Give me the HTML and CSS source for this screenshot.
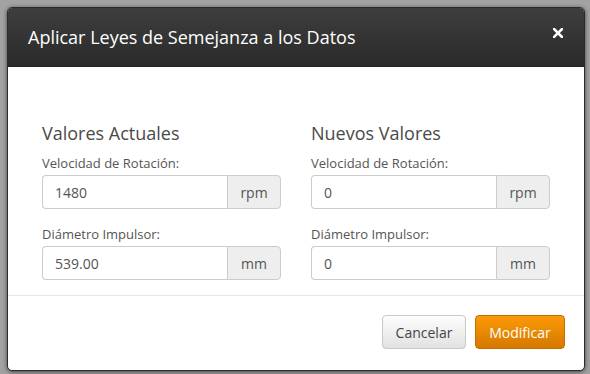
FILE: index.html
```html
<!DOCTYPE html>
<html lang="es">
<head>
    <meta charset="UTF-8">
    <title>Aplicar Leyes de Semejanza</title>
    <link rel="stylesheet" href="styles.css">
</head>
<body>
    <div class="modal">
        <div class="modal-header">
            <h3>Aplicar Leyes de Semejanza a los Datos</h3>
            <button class="close" type="button">
                <svg width="10" height="10" viewBox="0 0 10 10">
                    <path d="M1 1L9 9M9 1L1 9" stroke="#fff" stroke-width="2.6" stroke-linecap="square"/>
                </svg>
            </button>
        </div>

        <div class="modal-body">
            <div class="col">
                <h4>Valores Actuales</h4>
                <label>Velocidad de Rotación:</label>
                <div class="input-group">
                    <input type="text" value="1480">
                    <span class="addon">rpm</span>
                </div>
                <label>Diámetro Impulsor:</label>
                <div class="input-group">
                    <input type="text" value="539.00">
                    <span class="addon">mm</span>
                </div>
            </div>

            <div class="col">
                <h4>Nuevos Valores</h4>
                <label>Velocidad de Rotación:</label>
                <div class="input-group">
                    <input type="text" value="0">
                    <span class="addon">rpm</span>
                </div>
                <label>Diámetro Impulsor:</label>
                <div class="input-group">
                    <input type="text" value="0">
                    <span class="addon">mm</span>
                </div>
            </div>
        </div>

        <div class="modal-footer">
            <button class="btn btn-default" type="button">Cancelar</button>
            <button class="btn btn-primary" type="button">Modificar</button>
        </div>
    </div>
</body>
</html>
```

FILE: styles.css
```css
* {
    margin: 0;
    padding: 0;
    box-sizing: border-box;
    font-family: 'Open Sans', 'Noto Sans', sans-serif;
}

body {
    background: #a2a2a2;
    padding: 7px;
    height: 374px;
    overflow: hidden;
}

.modal {
    width: 578px;
    background: #fff;
    border: 1px solid #2a2a2a;
    border-radius: 5px;
    box-shadow: 0 1px 4px rgba(0, 0, 0, 0.6);
    overflow: hidden;
}

.modal-header {
    display: flex;
    align-items: flex-start;
    justify-content: space-between;
    padding: 19px 21px 19px 20px;
    background: linear-gradient(#3e3e3e, #2a2a2a);
    border-bottom: 1px solid #222;
}

.modal-header h3 {
    color: #fff;
    font-size: 18px;
    font-weight: 400;
    line-height: 20px;
}

.close {
    background: none;
    border: none;
    margin-top: 1px;
    width: 10px;
    height: 10px;
    display: flex;
    cursor: pointer;
}

.modal-body {
    display: flex;
    gap: 30px;
    padding: 56px 34px 15px 34px;
}

.col {
    width: 239px;
    display: flex;
    flex-direction: column;
}

.col h4 {
    font-size: 18px;
    font-weight: 400;
    line-height: 20px;
    color: #4a4a4a;
    margin-bottom: 11px;
}

.col label {
    font-size: 13px;
    line-height: 18px;
    color: #555;
    margin-bottom: 3px;
}

.input-group {
    display: flex;
    height: 34px;
    margin-bottom: 16px;
}

.input-group:last-child {
    margin-bottom: 0;
}

.input-group input {
    flex: 1;
    min-width: 0;
    padding: 0 12px;
    border: 1px solid #ccc;
    border-right: none;
    border-radius: 4px 0 0 4px;
    font-size: 14px;
    color: #555;
    outline: none;
}

.addon {
    width: 54px;
    display: flex;
    align-items: center;
    justify-content: center;
    background: #eee;
    border: 1px solid #ccc;
    border-radius: 0 4px 4px 0;
    font-size: 14px;
    color: #555;
}

.modal-footer {
    display: flex;
    justify-content: flex-end;
    gap: 9px;
    padding: 19px 19px 21px;
    border-top: 1px solid #e5e5e5;
}

.btn {
    height: 34px;
    padding: 0 12px;
    font-size: 14px;
    border-radius: 4px;
    cursor: pointer;
}

.btn-default {
    width: 84px;
    color: #444;
    background: linear-gradient(#fdfdfd, #e2e2e2);
    border: 1px solid #c8c8c8;
}

.btn-primary {
    width: 90px;
    color: #fff;
    background: linear-gradient(#fb9a05, #d57800);
    border: 1px solid #c56f00;
}
```
